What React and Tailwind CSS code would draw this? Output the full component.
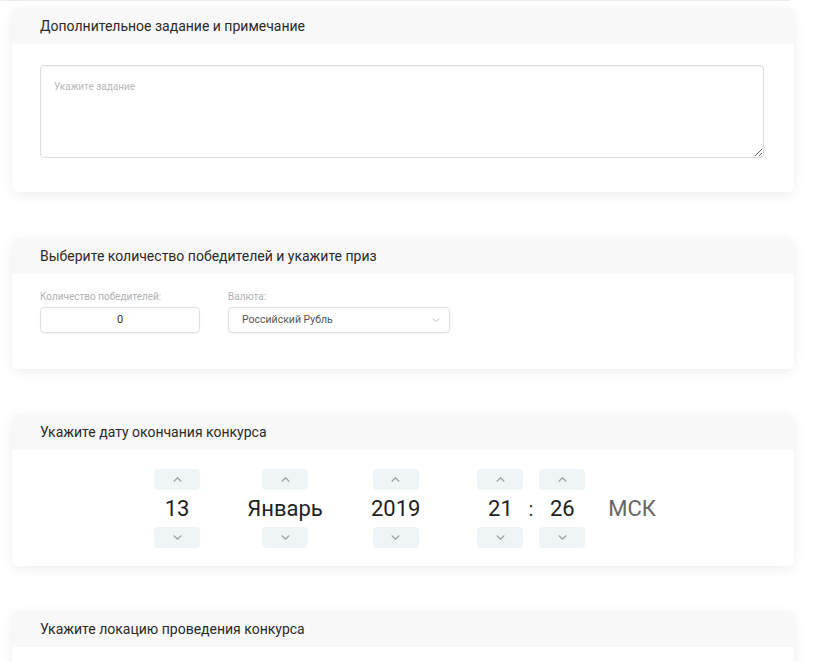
import React from 'react';
import { ChevronDown } from 'lucide-react';

const Caret = ({ down }) => (
  <svg width="9" height="5" viewBox="0 0 9 5" className="text-[#9aa0a4]">
    <path d={down ? 'M1 0.8 L4.5 4.2 L8 0.8' : 'M1 4.2 L4.5 0.8 L8 4.2'} fill="none" stroke="currentColor" strokeWidth="1.2" strokeLinecap="round" strokeLinejoin="round" />
  </svg>
);

function Card({ title, children, className = '' }) {
  return (
    <section className={`w-[782px] ml-3 rounded-md bg-white shadow-[0_3px_12px_rgba(0,0,0,0.07)] ${className}`}>
      <div className="h-9 flex items-center px-7 bg-[#f8f8f9] rounded-t-md">
        <h2 className="text-[14px] text-[#2a2a2a]">{title}</h2>
      </div>
      {children}
    </section>
  );
}

function Spin({ value, className = '' }) {
  return (
    <div className={`flex flex-col items-center ${className}`}>
      <button className="w-[46px] h-[21px] rounded bg-[#eff5f7] flex items-center justify-center"><Caret /></button>
      <div className="h-[37px] flex items-center text-[22px] text-[#222] leading-none">{value}</div>
      <button className="w-[46px] h-[21px] rounded bg-[#eff5f7] flex items-center justify-center"><Caret down /></button>
    </div>
  );
}

export default function App() {
  return (
    <div className="min-h-screen bg-white overflow-hidden" style={{ fontFamily: 'Roboto, "Liberation Sans", sans-serif' }}>
      <div className="h-px w-[790px] bg-[#ececec]" />

      <Card title="Дополнительное задание и примечание" className="mt-[7px]">
        <div className="pt-[21px] pb-[34px] pl-7 pr-[30px]">
          <textarea
            placeholder="Укажите задание"
            className="block w-full h-[93px] border border-[#dcdcdc] rounded-sm px-[13px] py-[13px] text-[10px] text-[#444] placeholder:text-[#b9b9b9] shadow-[inset_0_1px_2px_rgba(0,0,0,0.04)] outline-none"
          />
        </div>
      </Card>

      <Card title="Выберите количество победителей и укажите приз" className="mt-[46px]">
        <div className="flex gap-7 pt-[18px] pb-[36px] px-7">
          <label className="block">
            <span className="block text-[10px] text-[#b0b0b0] leading-none mb-[5px]">Количество победителей:</span>
            <div className="w-[160px] h-[26px] border border-[#e0e0e0] rounded-sm flex items-center justify-center text-[11px] text-[#333] shadow-[0_1px_2px_rgba(0,0,0,0.05)]">0</div>
          </label>
          <label className="block">
            <span className="block text-[10px] text-[#b0b0b0] leading-none mb-[5px]">Валюта:</span>
            <div className="w-[222px] h-[26px] border border-[#e0e0e0] rounded-sm flex items-center justify-between pl-[13px] pr-[7px] text-[10.5px] text-[#555] shadow-[0_1px_2px_rgba(0,0,0,0.05)]">
              Российский Рубль
              <ChevronDown className="w-3 h-3 text-[#aaa]" strokeWidth={1.5} />
            </div>
          </label>
        </div>
      </Card>

      <Card title="Укажите дату окончания конкурса" className="mt-[45px]">
        <div className="flex items-center justify-center pt-[19px] pb-[18px] pl-[4px]">
          <Spin value="13" />
          <Spin value="Январь" className="ml-[45px] w-[80px]" />
          <Spin value="2019" className="ml-[46px]" />
          <Spin value="21" className="ml-[57px]" />
          <span className="ml-[5px] text-[20px] text-[#333]">:</span>
          <Spin value="26" className="ml-[6px]" />
          <span className="ml-[23px] text-[22px] text-[#666]">МСК</span>
        </div>
      </Card>

      <Card title="Укажите локацию проведения конкурса" className="mt-[45px]">
        <div className="h-16" />
      </Card>
    </div>
  );
}
